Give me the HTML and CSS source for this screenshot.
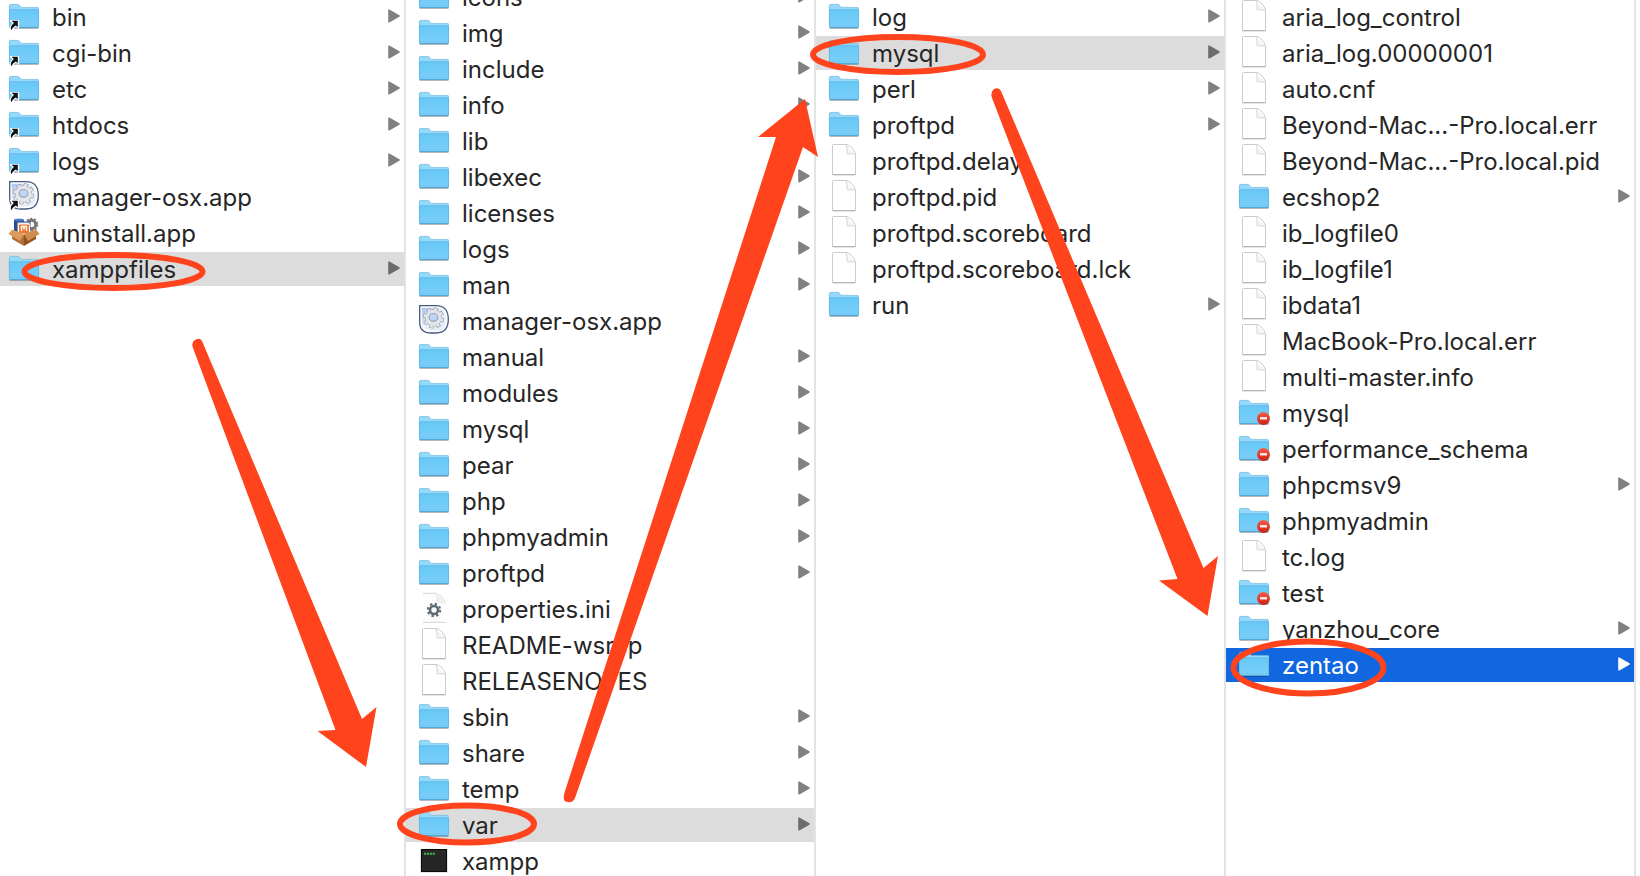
FILE: index.html
```html
<!DOCTYPE html>
<html lang="en">
<head>
<meta charset="utf-8">
<title>xamppfiles</title>
<link rel="stylesheet" href="styles.css">
</head>
<body>
<svg class="sprite" aria-hidden="true">
  <defs>
    <linearGradient id="g-folder" x1="0" y1="0" x2="0" y2="1"><stop offset="0" stop-color="#68c8f6"/><stop offset="1" stop-color="#7cd0f9"/></linearGradient>
    <linearGradient id="g-red" x1="0" y1="0" x2="0" y2="1"><stop offset="0" stop-color="#f4604a"/><stop offset="1" stop-color="#cf1d12"/></linearGradient>
    <linearGradient id="g-app" x1="0" y1="0" x2="1" y2="1"><stop offset="0" stop-color="#a9c4ee"/><stop offset=".5" stop-color="#eef3fb"/><stop offset="1" stop-color="#dfe9f8"/></linearGradient>
    <symbol id="folder" viewBox="0 0 32 34">
      <path d="M1.500 28.500h29" stroke="#000" stroke-opacity=".25"/>
      <path d="M1 6q0-1.800 1.600-1.800h7.200q1 0 1.600 .9l1.200 1.600q.5 .7 1.400 .7h15.600q1.400 0 1.400 1.400V12H1z" fill="#92d9fb"/>
      <path d="M1.400 12V6q0-1.600 1.400-1.600h7q.8 0 1.300 .7l1.400 1.700q.5 .6 1.300 .6h15.500q1.300 0 1.300 1.300" fill="none" stroke="#74b9de" stroke-width=".7"/>
      <path d="M1 9.700h30v17q0 1.300-1.300 1.300H2.300Q1 28 1 26.700z" fill="url(#g-folder)"/>
      <path d="M1.400 10v16.500M30.600 10v16.500M2 9.700h28" stroke="#5cb2de" stroke-width=".7" fill="none"/>
      <path d="M2 25.700h28" stroke="#69bfea" stroke-width=".6"/>
      <path d="M1.500 27.600h29" stroke="#4a9fca" stroke-width=".9"/>
    </symbol>
    <symbol id="alias" viewBox="0 0 32 34">
      <path d="M2.500 20.500h8v7.500l-2.400-1.800q-3 1.300-4.400 4.300l-1.800-.6q.2-4.400 3.600-6.600z" fill="#fff" stroke="#fff" stroke-width="1.200" stroke-linejoin="round"/>
      <path d="M3.500 20.800h6.300v6.500l-1.900-1.900Q4.600 26.800 3.200 30.300q-1.600-3.800 2.700-7.200z" fill="#111"/>
    </symbol>
    <symbol id="denied" viewBox="0 0 32 34">
      <circle cx="25.500" cy="22.500" r="6.500" fill="url(#g-red)"/>
      <rect x="22" y="21.200" width="7" height="2.200" fill="#fff"/>
    </symbol>
    <symbol id="file" viewBox="0 0 32 34">
      <path d="M4.500 1.500q0-1 1-1h13.500q2.500 .8 5 3.500 3 3 3.500 6v20q0 .8-.8 .8H5.300q-.8 0-.8-.8z" fill="#fff" stroke="#c6c6c6" stroke-width=".9"/>
      <path d="M4.500 30.700h23" stroke="#a9a9a9" stroke-width=".9"/>
      <path d="M18 1q1.500 3 1 8-.1 1.200 1.500 .9 3.500-.5 7 .3" fill="#f6f6f6" stroke="#c9c9c9" stroke-width=".8"/>
    </symbol>
    <symbol id="config" viewBox="0 0 32 34">
      <path d="M5 1h14q2.500 .8 5 3.500 3 3 3.500 6V30H5z" fill="#fdfdfd"/>
      <path d="M5 1.300h13M5 30.300h23" stroke="#c8c8c8" stroke-width=".8"/>
      <path d="M18 1.300q1.500 3 1 8 2.500 1.500 8.500 1.500-.6-3-3.500-6t-6-3.500z" fill="#f1f1f1" stroke="#dcdcdc" stroke-width=".6"/>
      <circle cx="16" cy="18" r="4" fill="none" stroke="#5b6a73" stroke-width="2.600"/>
      <circle cx="16" cy="18" r="6.200" fill="none" stroke="#5b6a73" stroke-width="2" stroke-dasharray="2.400 2.470"/>
    </symbol>
    <symbol id="manager" viewBox="0 0 32 34">
      <path d="M1.700 1.700H18q12.300 0 12.300 13.600T18 29h-5Q1.700 29 1.700 18z" fill="#fff" stroke="#44597f" stroke-width="1.300"/>
      <path d="M3.800 3.800H18q10 0 10 11.500T18 26.800h-4.500Q3.800 26.800 3.800 17.500z" fill="url(#g-app)"/>
      <g fill="none">
        <circle cx="15.500" cy="13.900" r="9.400" stroke="#8b9099" stroke-width="2.600" stroke-dasharray="4.200 3.182"/>
        <circle cx="15.500" cy="13.900" r="6.200" stroke="#8b9099" stroke-width="5"/>
        <circle cx="15.500" cy="13.900" r="9" stroke="#e4e5ea" stroke-width="2.400" stroke-dasharray="3 4.069" stroke-dashoffset="-.51"/>
        <circle cx="15.500" cy="13.900" r="6.200" stroke="#e4e5ea" stroke-width="4"/>
      </g>
      <ellipse cx="15.500" cy="13.300" rx="4.400" ry="3.700" fill="#c0d5f3" stroke="#8390a6" stroke-width=".8"/>
    </symbol>
    <symbol id="uninstall" viewBox="0 0 32 34">
      <circle cx="23.500" cy="8.500" r="4.200" fill="none" stroke="#777" stroke-width="3"/>
      <circle cx="23.500" cy="8.500" r="6" fill="none" stroke="#777" stroke-width="1.600" stroke-dasharray="2 1.770"/>
      <path d="M6 4v14h10V4z" fill="#284a92"/><ellipse cx="11" cy="4" rx="5" ry="1.500" fill="#4c79ca"/>
      <rect x="9" y="6" width="13" height="14" fill="#dfe5ef" stroke="#3a4d76"/>
      <rect x="10.500" y="8" width="11" height="10" rx="1.500" fill="#ef762b" stroke="#fff"/>
      <path d="M13.500 15v-4.500h5V15M16 10.500v3" fill="none" stroke="#fff" stroke-width="1.400"/>
      <path d="M4 16l12 3v11L4 23z" fill="#b26e36"/><path d="M28 16l-12 3v11l12-7z" fill="#925322"/>
      <path d="M4 13.500l12 4.500-4 7L.5 18z" fill="#dc9a5e"/><path d="M28 13.500L16 18l4 7 11.500-7z" fill="#d18d50"/>
    </symbol>
    <symbol id="exec" viewBox="0 0 32 34">
      <rect x="2.500" y="5" width="27" height="23.500" fill="#c9c9c9"/>
      <rect x="3.500" y="5.500" width="25" height="22" fill="#262626" stroke="#090909"/>
      <path d="M6 9.800h11" stroke="#3eb34e" stroke-width="2" stroke-dasharray="2.200 .7"/>
    </symbol>
    <symbol id="chevron" viewBox="0 0 12 14">
      <path d="M1 1.200v11.600L11 7z" fill="currentColor" stroke="currentColor" stroke-width="1.600" stroke-linejoin="round"/>
    </symbol>
  </defs>
</svg>
<main class="browser">
  <ul class="column">
    <li><button class="row"><svg class="icon"><use href="#folder"/><use href="#alias"/></svg><span class="name">bin</span><svg class="chevron"><use href="#chevron"/></svg></button></li>
    <li><button class="row"><svg class="icon"><use href="#folder"/><use href="#alias"/></svg><span class="name">cgi-bin</span><svg class="chevron"><use href="#chevron"/></svg></button></li>
    <li><button class="row"><svg class="icon"><use href="#folder"/><use href="#alias"/></svg><span class="name">etc</span><svg class="chevron"><use href="#chevron"/></svg></button></li>
    <li><button class="row"><svg class="icon"><use href="#folder"/><use href="#alias"/></svg><span class="name">htdocs</span><svg class="chevron"><use href="#chevron"/></svg></button></li>
    <li><button class="row"><svg class="icon"><use href="#folder"/><use href="#alias"/></svg><span class="name">logs</span><svg class="chevron"><use href="#chevron"/></svg></button></li>
    <li><button class="row"><svg class="icon"><use href="#manager"/><use href="#alias"/></svg><span class="name">manager-osx.app</span></button></li>
    <li><button class="row"><svg class="icon"><use href="#uninstall"/></svg><span class="name">uninstall.app</span></button></li>
    <li><button class="row row-open"><svg class="icon"><use href="#folder"/></svg><span class="name">xamppfiles</span><svg class="chevron"><use href="#chevron"/></svg></button></li>
  </ul>
  <ul class="column column-scrolled">
    <li><button class="row"><svg class="icon"><use href="#folder"/></svg><span class="name">icons</span><svg class="chevron"><use href="#chevron"/></svg></button></li>
    <li><button class="row"><svg class="icon"><use href="#folder"/></svg><span class="name">img</span><svg class="chevron"><use href="#chevron"/></svg></button></li>
    <li><button class="row"><svg class="icon"><use href="#folder"/></svg><span class="name">include</span><svg class="chevron"><use href="#chevron"/></svg></button></li>
    <li><button class="row"><svg class="icon"><use href="#folder"/></svg><span class="name">info</span><svg class="chevron"><use href="#chevron"/></svg></button></li>
    <li><button class="row"><svg class="icon"><use href="#folder"/></svg><span class="name">lib</span><svg class="chevron"><use href="#chevron"/></svg></button></li>
    <li><button class="row"><svg class="icon"><use href="#folder"/></svg><span class="name">libexec</span><svg class="chevron"><use href="#chevron"/></svg></button></li>
    <li><button class="row"><svg class="icon"><use href="#folder"/></svg><span class="name">licenses</span><svg class="chevron"><use href="#chevron"/></svg></button></li>
    <li><button class="row"><svg class="icon"><use href="#folder"/></svg><span class="name">logs</span><svg class="chevron"><use href="#chevron"/></svg></button></li>
    <li><button class="row"><svg class="icon"><use href="#folder"/></svg><span class="name">man</span><svg class="chevron"><use href="#chevron"/></svg></button></li>
    <li><button class="row"><svg class="icon"><use href="#manager"/></svg><span class="name">manager-osx.app</span></button></li>
    <li><button class="row"><svg class="icon"><use href="#folder"/></svg><span class="name">manual</span><svg class="chevron"><use href="#chevron"/></svg></button></li>
    <li><button class="row"><svg class="icon"><use href="#folder"/></svg><span class="name">modules</span><svg class="chevron"><use href="#chevron"/></svg></button></li>
    <li><button class="row"><svg class="icon"><use href="#folder"/></svg><span class="name">mysql</span><svg class="chevron"><use href="#chevron"/></svg></button></li>
    <li><button class="row"><svg class="icon"><use href="#folder"/></svg><span class="name">pear</span><svg class="chevron"><use href="#chevron"/></svg></button></li>
    <li><button class="row"><svg class="icon"><use href="#folder"/></svg><span class="name">php</span><svg class="chevron"><use href="#chevron"/></svg></button></li>
    <li><button class="row"><svg class="icon"><use href="#folder"/></svg><span class="name">phpmyadmin</span><svg class="chevron"><use href="#chevron"/></svg></button></li>
    <li><button class="row"><svg class="icon"><use href="#folder"/></svg><span class="name">proftpd</span><svg class="chevron"><use href="#chevron"/></svg></button></li>
    <li><button class="row"><svg class="icon"><use href="#config"/></svg><span class="name">properties.ini</span></button></li>
    <li><button class="row"><svg class="icon"><use href="#file"/></svg><span class="name">README-wsrep</span></button></li>
    <li><button class="row"><svg class="icon"><use href="#file"/></svg><span class="name">RELEASENOTES</span></button></li>
    <li><button class="row"><svg class="icon"><use href="#folder"/></svg><span class="name">sbin</span><svg class="chevron"><use href="#chevron"/></svg></button></li>
    <li><button class="row"><svg class="icon"><use href="#folder"/></svg><span class="name">share</span><svg class="chevron"><use href="#chevron"/></svg></button></li>
    <li><button class="row"><svg class="icon"><use href="#folder"/></svg><span class="name">temp</span><svg class="chevron"><use href="#chevron"/></svg></button></li>
    <li><button class="row row-open"><svg class="icon"><use href="#folder"/></svg><span class="name">var</span><svg class="chevron"><use href="#chevron"/></svg></button></li>
    <li><button class="row"><svg class="icon"><use href="#exec"/></svg><span class="name">xampp</span></button></li>
  </ul>
  <ul class="column">
    <li><button class="row"><svg class="icon"><use href="#folder"/></svg><span class="name">log</span><svg class="chevron"><use href="#chevron"/></svg></button></li>
    <li><button class="row row-open"><svg class="icon"><use href="#folder"/></svg><span class="name">mysql</span><svg class="chevron"><use href="#chevron"/></svg></button></li>
    <li><button class="row"><svg class="icon"><use href="#folder"/></svg><span class="name">perl</span><svg class="chevron"><use href="#chevron"/></svg></button></li>
    <li><button class="row"><svg class="icon"><use href="#folder"/></svg><span class="name">proftpd</span><svg class="chevron"><use href="#chevron"/></svg></button></li>
    <li><button class="row"><svg class="icon"><use href="#file"/></svg><span class="name">proftpd.delay</span></button></li>
    <li><button class="row"><svg class="icon"><use href="#file"/></svg><span class="name">proftpd.pid</span></button></li>
    <li><button class="row"><svg class="icon"><use href="#file"/></svg><span class="name">proftpd.scoreboard</span></button></li>
    <li><button class="row"><svg class="icon"><use href="#file"/></svg><span class="name">proftpd.scoreboard.lck</span></button></li>
    <li><button class="row"><svg class="icon"><use href="#folder"/></svg><span class="name">run</span><svg class="chevron"><use href="#chevron"/></svg></button></li>
  </ul>
  <ul class="column">
    <li><button class="row"><svg class="icon"><use href="#file"/></svg><span class="name">aria_log_control</span></button></li>
    <li><button class="row"><svg class="icon"><use href="#file"/></svg><span class="name">aria_log.00000001</span></button></li>
    <li><button class="row"><svg class="icon"><use href="#file"/></svg><span class="name">auto.cnf</span></button></li>
    <li><button class="row"><svg class="icon"><use href="#file"/></svg><span class="name">Beyond-Mac...-Pro.local.err</span></button></li>
    <li><button class="row"><svg class="icon"><use href="#file"/></svg><span class="name">Beyond-Mac...-Pro.local.pid</span></button></li>
    <li><button class="row"><svg class="icon"><use href="#folder"/></svg><span class="name">ecshop2</span><svg class="chevron"><use href="#chevron"/></svg></button></li>
    <li><button class="row"><svg class="icon"><use href="#file"/></svg><span class="name">ib_logfile0</span></button></li>
    <li><button class="row"><svg class="icon"><use href="#file"/></svg><span class="name">ib_logfile1</span></button></li>
    <li><button class="row"><svg class="icon"><use href="#file"/></svg><span class="name">ibdata1</span></button></li>
    <li><button class="row"><svg class="icon"><use href="#file"/></svg><span class="name">MacBook-Pro.local.err</span></button></li>
    <li><button class="row"><svg class="icon"><use href="#file"/></svg><span class="name">multi-master.info</span></button></li>
    <li><button class="row"><svg class="icon"><use href="#folder"/><use href="#denied"/></svg><span class="name">mysql</span></button></li>
    <li><button class="row"><svg class="icon"><use href="#folder"/><use href="#denied"/></svg><span class="name">performance_schema</span></button></li>
    <li><button class="row"><svg class="icon"><use href="#folder"/></svg><span class="name">phpcmsv9</span><svg class="chevron"><use href="#chevron"/></svg></button></li>
    <li><button class="row"><svg class="icon"><use href="#folder"/><use href="#denied"/></svg><span class="name">phpmyadmin</span></button></li>
    <li><button class="row"><svg class="icon"><use href="#file"/></svg><span class="name">tc.log</span></button></li>
    <li><button class="row"><svg class="icon"><use href="#folder"/><use href="#denied"/></svg><span class="name">test</span></button></li>
    <li><button class="row"><svg class="icon"><use href="#folder"/></svg><span class="name">yanzhou_core</span><svg class="chevron"><use href="#chevron"/></svg></button></li>
    <li><button class="row row-active"><svg class="icon"><use href="#folder"/></svg><span class="name">zentao</span><svg class="chevron"><use href="#chevron"/></svg></button></li>
  </ul>
  <svg class="markup" viewBox="0 0 1640 876" preserveAspectRatio="none" aria-hidden="true">
    <g fill="none" stroke="#ff431c" stroke-width="6">
      <ellipse cx="113.500" cy="271.500" rx="89" ry="16.500"/>
      <ellipse cx="467" cy="824" rx="67" ry="18.500"/>
      <ellipse cx="898" cy="54.500" rx="85" ry="17.500"/>
      <ellipse cx="1308.500" cy="667.500" rx="75" ry="26"/>
    </g>
    <g fill="#ff431c">
      <path d="M202 341l160 378 14.500-12-10.500 60-48.500-36 18-1L193 348q-2-6 2-8 5-3 7 1z"/>
      <path d="M564 799q-1-1 1-8L776 137h-18l47-38 13 58-15-10L575 798q-2 5-7 4-4 0-4-3z"/>
      <path d="M1001 91l202.500 477 14.500-12-10.500 60-48.500-35.500 18.500-1.500L992 98q-2-6 2-9 5-2 7 2z"/>
    </g>
  </svg>
</main>
</body>
</html>
```
FILE: styles.css
```css
* { box-sizing: border-box; }

body {
  margin: 0;
  background: #fff;
  color: #262626;
  font-family: Inter, "Liberation Sans", sans-serif;
  font-size: 24px;
  line-height: 32px;
}

.sprite {
  position: absolute;
  width: 0;
  height: 0;
}

.browser {
  position: relative;
  display: flex;
  height: 100vh;
  margin-left: -4px;
  padding-right: 4px;
  overflow: hidden;
}

.column {
  flex: 1 1 0;
  min-width: 0;
  display: flex;
  flex-direction: column;
  gap: 2px;
  margin: 0;
  padding: 0;
  list-style: none;
  border-right: 2px solid #e3e3e3;
}

.column-scrolled { margin-top: -20px; }

.row {
  display: flex;
  align-items: center;
  gap: 12px;
  width: 100%;
  padding: 0 4px 0 12px;
  border: 0;
  background: none;
  color: inherit;
  font: inherit;
  text-align: left;
}

.row-open { background: #dcdcdc; }

.row-active {
  background: #1167df;
  color: #fff;
}

.icon {
  flex: none;
  width: 32px;
  height: 34px;
}

.name {
  flex: 1;
  min-width: 0;
  padding-top: 2px;
  white-space: nowrap;
}

.chevron {
  flex: none;
  width: 12px;
  height: 14px;
  margin-bottom: 2px;
  color: #808080;
}

.row-open .chevron { color: #6c6c6c; }
.row-active .chevron { color: #fff; }

.markup {
  position: absolute;
  top: 0;
  left: 4px;
  width: calc(100% - 4px);
  height: 876px;
  pointer-events: none;
}
```
